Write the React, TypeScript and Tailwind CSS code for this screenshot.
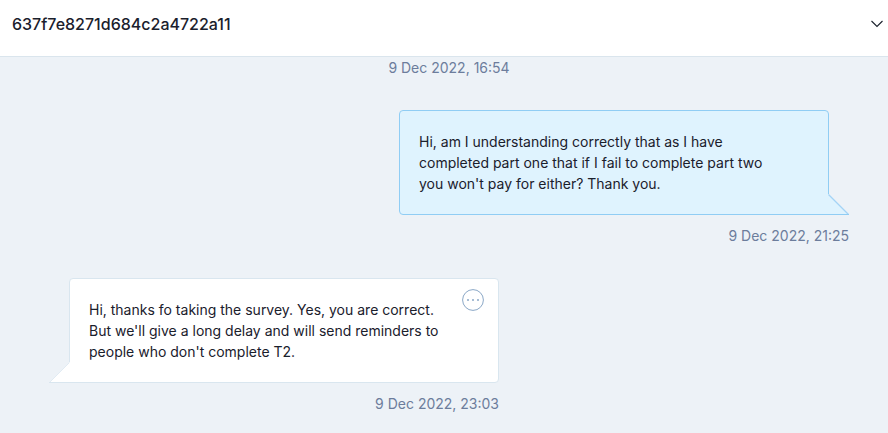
import { useState } from 'react';

interface Message {
  id: number;
  content: string;
  sender: 'user' | 'other';
  timestamp: string;
}

const messages: Message[] = [
  {
    id: 1,
    content:
      "Hi, am I understanding correctly that as I have completed part one that if I fail to complete part two you won't pay for either? Thank you.",
    sender: 'user',
    timestamp: '9 Dec 2022, 21:25',
  },
  {
    id: 2,
    content:
      "Hi, thanks fo taking the survey. Yes, you are correct. But we'll give a long delay and will send reminders to people who don't complete T2.",
    sender: 'other',
    timestamp: '9 Dec 2022, 23:03',
  },
];

function MessageBubble({ message }: { message: Message }) {
  const isUser = message.sender === 'user';

  return (
    <li className={`flex flex-col ${isUser ? 'items-end' : 'items-start'}`}>
      <div
        className={`relative w-full max-w-[430px] border py-5 pl-[19px] pr-14 ${
          isUser
            ? 'mr-5 rounded-l rounded-tr border-[#90cdf4] bg-[#dff3fe]'
            : 'ml-5 rounded-r rounded-tl border-[#d9e6ef] bg-white'
        }`}
      >
        <p>{message.content}</p>

        {!isUser && (
          <button
            type="button"
            aria-label="Message options"
            className="absolute right-3.5 top-2.5 text-[#8ba8c7]"
          >
            <svg width="22" height="22" viewBox="0 0 22 22" fill="none">
              <circle cx="11" cy="11" r="10.4" stroke="currentColor" strokeWidth="1" />
              <circle cx="6" cy="11" r="1" fill="currentColor" />
              <circle cx="11" cy="11" r="1" fill="currentColor" />
              <circle cx="16" cy="11" r="1" fill="currentColor" />
            </svg>
          </button>
        )}

        {/* Tail */}
        {isUser ? (
          <svg
            className="absolute -bottom-px -right-[21px]"
            width="21"
            height="21"
            viewBox="0 0 21 21"
            fill="none"
          >
            <path d="M0 0V21H21L1 1V0Z" fill="#dff3fe" />
            <path d="M0.5 0.5L20.5 20.5" stroke="#a4d3f6" strokeWidth="1.3" />
            <path d="M0 20.5H21" stroke="#90cdf4" />
          </svg>
        ) : (
          <svg
            className="absolute -bottom-px -left-[21px]"
            width="21"
            height="21"
            viewBox="0 0 21 21"
            fill="none"
          >
            <path d="M21 0V21H0L20 1V0Z" fill="#ffffff" />
            <path d="M20.5 0.5L0.5 20.5" stroke="#e1ebf3" />
            <path d="M0 20.5H21" stroke="#d9e6ef" />
          </svg>
        )}
      </div>
      <time
        className={`mt-2.5 w-full text-right text-[#6c7d9c] ${
          isUser ? '' : 'max-w-[450px]'
        }`}
      >
        {message.timestamp}
      </time>
    </li>
  );
}

export default function App() {
  const [isOpen, setIsOpen] = useState(true);

  return (
    <div className="flex min-h-screen flex-col bg-[#edf2f7] font-['Inter',sans-serif] text-sm leading-[21px] text-[#1a202c]">
      <header className="flex h-[57px] items-center justify-between border-b border-[#dae5ed] bg-white pb-2 pl-3 pr-1">
        <h1 className="text-base font-medium">637f7e8271d684c2a4722a11</h1>
        <button
          type="button"
          aria-label="Toggle conversation"
          aria-expanded={isOpen}
          onClick={() => setIsOpen(!isOpen)}
        >
          <svg width="14" height="8" viewBox="0 0 14 8" fill="none">
            <path d="M1.5 1L7 6.5L12.5 1" stroke="currentColor" strokeWidth="1.1" />
          </svg>
        </button>
      </header>

      {isOpen && (
        <main className="pb-5 pl-[49px] pr-[39px]">
          <time className="block text-center text-[#6c7d9c]">9 Dec 2022, 16:54</time>
          <ul className="mt-8 flex flex-col gap-8">
            {messages.map((message) => (
              <MessageBubble key={message.id} message={message} />
            ))}
          </ul>
        </main>
      )}
    </div>
  );
}
